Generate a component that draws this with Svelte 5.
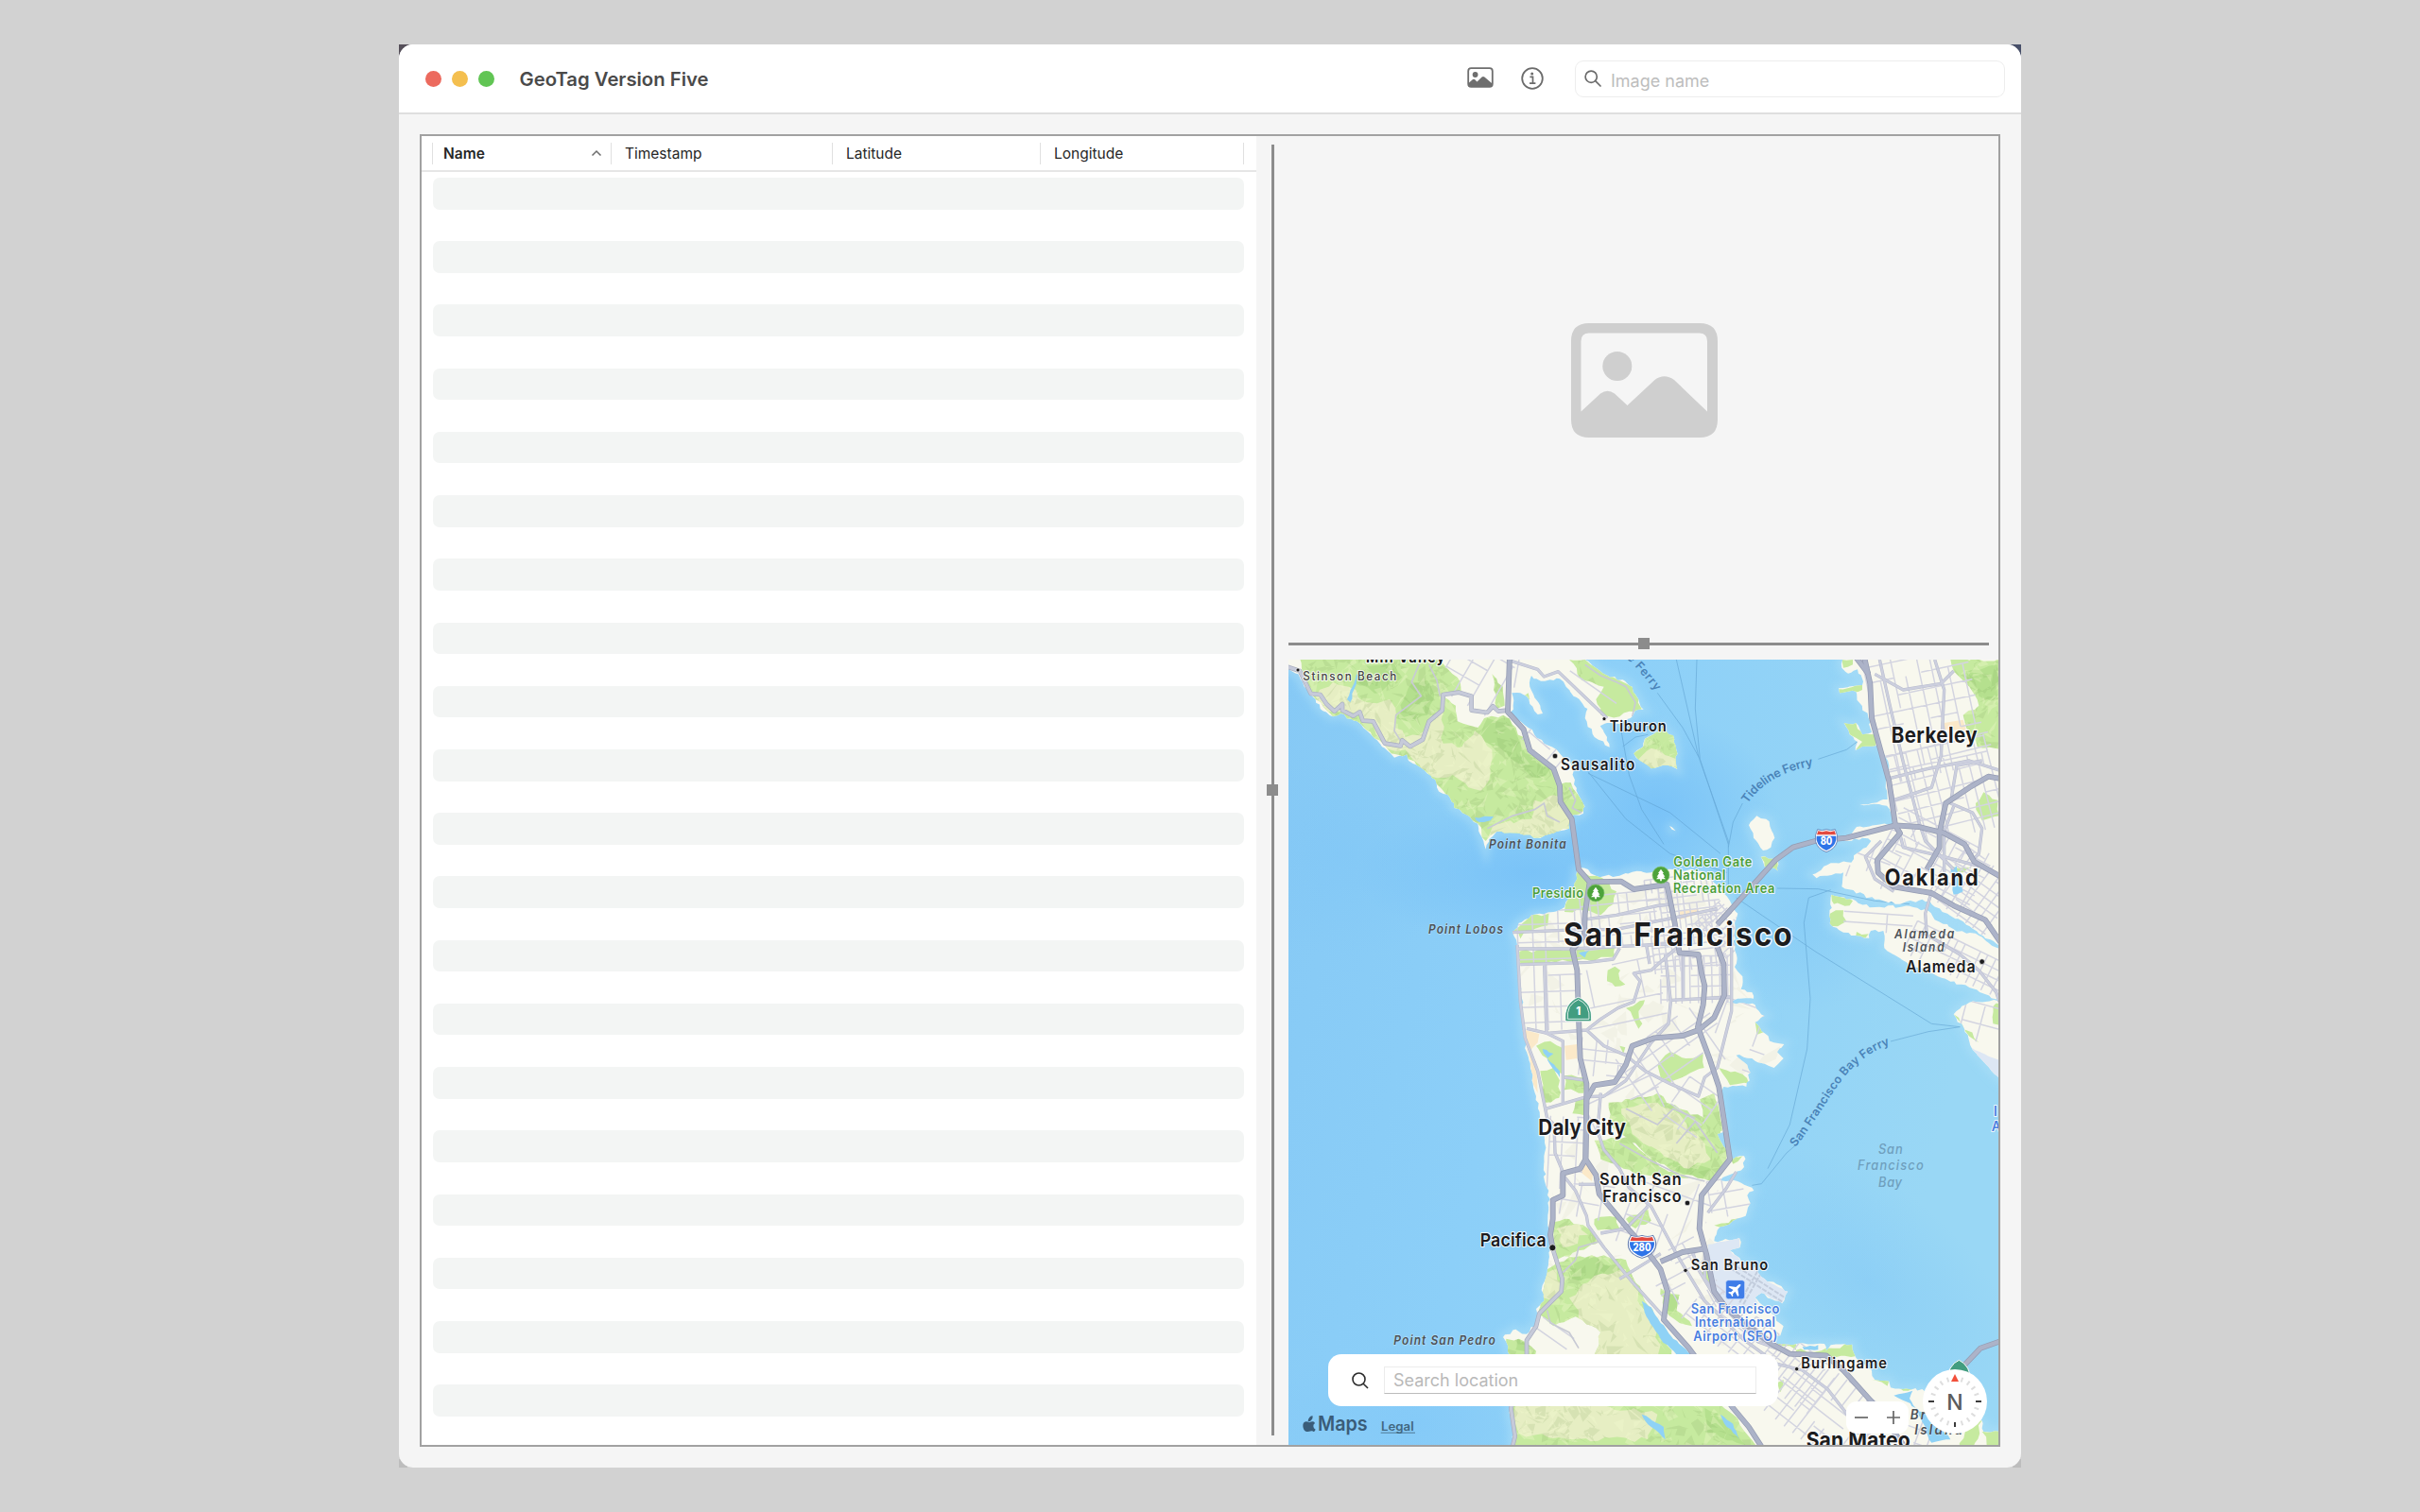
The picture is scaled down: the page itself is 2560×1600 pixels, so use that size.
<script>
  const columns = [
    { label: 'Name', key: 'name', sorted: true },
    { label: 'Timestamp', key: 'timestamp' },
    { label: 'Latitude', key: 'latitude' },
    { label: 'Longitude', key: 'longitude' },
  ];
  const rows = Array.from({ length: 40 }, (_, i) => i);

  // Deterministic random source, so the terrain is the same on every load.
  let seed = 7;
  const rnd = () => {
    seed = (seed * 1664525 + 1013904223) % 4294967296;
    return seed / 4294967296;
  };

  const parse = (s) => s.trim().split(/\s+/).map((p) => p.split(',').map(Number));

  // Turns a coarse outline into a ragged shoreline.
  function rough(s, amp = 7, step = 16) {
    const pts = parse(s);
    let d = '';
    pts.forEach(([x, y], i) => {
      const [nx, ny] = pts[(i + 1) % pts.length];
      const len = Math.hypot(nx - x, ny - y);
      const n = Math.max(1, Math.round(len / step));
      for (let k = 0; k < n; k++) {
        const t = k / n;
        const a = k === 0 ? 0 : amp;
        const px = x + (nx - x) * t + (rnd() - 0.5) * a * 2;
        const py = y + (ny - y) * t + (rnd() - 0.5) * a * 2;
        d += (d ? 'L' : 'M') + px.toFixed(1) + ' ' + py.toFixed(1);
      }
    });
    return d + 'Z';
  }

  const line = (s) => 'M' + parse(s).map((p) => p.join(' ')).join('L');

  // Street grid centred on (cx, cy), rotated by deg; some segments are left out.
  function grid(cx, cy, w, h, dx, dy, deg, keep = 0.8) {
    const r = (deg * Math.PI) / 180;
    const c = Math.cos(r);
    const s = Math.sin(r);
    const at = (x, y) => (cx + x * c - y * s).toFixed(1) + ' ' + (cy + x * s + y * c).toFixed(1);
    let d = '';
    for (let x = -w / 2; x <= w / 2; x += dx * (0.8 + rnd() * 0.4))
      for (let y = -h / 2; y < h / 2; y += dy * 2)
        if (rnd() < keep) d += 'M' + at(x, y) + 'L' + at(x, Math.min(h / 2, y + dy * 2));
    for (let y = -h / 2; y <= h / 2; y += dy * (0.8 + rnd() * 0.4))
      for (let x = -w / 2; x < w / 2; x += dx * 2)
        if (rnd() < keep) d += 'M' + at(x, y) + 'L' + at(Math.min(w / 2, x + dx * 2), y);
    return d;
  }

  // Faceted hill shading.
  function facets(x0, y0, x1, y1, n, size) {
    let d = '';
    for (let i = 0; i < n; i++) {
      const x = x0 + rnd() * (x1 - x0);
      const y = y0 + rnd() * (y1 - y0);
      const q = () => ((rnd() - 0.5) * size).toFixed(1);
      d += `M${x.toFixed(1)} ${y.toFixed(1)}l${q()} ${q()}l${q()} ${q()}l${q()} ${q()}Z`;
    }
    return d;
  }

  const land = [
    '-30,0 10,55 40,70 70,120 95,150 110,180 150,205 175,195 240,230 290,280 325,315 345,335 385,325 390,345 440,375 475,405 480,430 500,450 520,460 535,495 580,520 610,545 618,580 635,626 645,595 670,570 740,575 800,590 850,575 900,560 905,520 945,512 950,490 930,455 915,420 915,375 890,340 860,310 820,290 770,240 735,215 715,190 722,170 718,130 745,130 765,140 775,165 800,198 816,195 808,170 790,145 775,110 780,75 810,92 850,90 870,85 890,110 958,180 950,210 980,270 1028,302 1020,270 998,235 1020,225 1060,228 1100,205 1110,185 1136,182 1120,150 1100,110 1070,88 1030,80 985,50 950,24 940,0',
    '1105,322 1135,300 1140,275 1165,262 1200,240 1230,265 1240,310 1243,372 1215,360 1160,370 1125,345',
    '935,685 960,690 985,710 1050,712 1100,698 1160,700 1230,690 1320,695 1370,740 1410,790 1435,830 1425,860 1425,945 1432,980 1425,1000 1450,1030 1445,1070 1480,1080 1485,1100 1420,1106 1405,1114 1490,1120 1520,1155 1490,1175 1520,1210 1550,1240 1582,1245 1560,1270 1580,1290 1550,1320 1510,1305 1480,1290 1430,1280 1465,1310 1475,1335 1462,1380 1430,1378 1390,1380 1385,1400 1388,1525 1370,1530 1390,1570 1420,1610 1455,1600 1455,1635 1420,1655 1380,1678 1420,1676 1480,1700 1486,1710 1465,1725 1475,1750 1460,1790 1420,1805 1370,1835 1360,1870 1440,1860 1442,1890 1410,1900 1455,1940 1480,1940 1520,1990 1594,2030 1576,2068 1510,2035 1490,2050 1580,2140 1570,2170 1550,2180 1560,2196 1710,2196 1715,2218 1730,2200 1798,2198 1810,2240 1860,2280 1870,2310 1915,2315 1920,2335 1960,2340 2020,2340 2060,2380 2140,2410 2170,2440 2210,2440 2215,2475 2290,2470 2290,2560 700,2560 725,2518 715,2440 710,2380 705,2220 700,2190 690,2175 730,2150 765,2165 800,2130 795,2085 820,2060 815,2010 830,1970 835,1930 840,1870 835,1830 835,1710 822,1680 822,1550 808,1490 795,1410 780,1330 765,1270 757,1230 750,1100 740,1020 735,930 720,890 740,860 780,835 850,825 885,810 900,770 925,720 925,690',
    '1765,0 1765,50 1785,68 1815,55 1830,85 1830,105 1755,115 1758,130 1810,125 1820,160 1850,210 1860,255 1830,262 1810,225 1772,225 1790,262 1815,285 1808,312 1830,300 1885,300 1915,360 1905,400 1910,468 1822,484 1908,488 1925,520 1928,545 1812,555 1772,600 1830,590 1858,600 1812,640 1795,668 1730,670 1672,706 1685,718 1770,700 1765,745 1870,785 1950,800 2020,785 2050,800 2100,830 2170,870 2290,950 2290,0',
    '1732,770 1870,810 1980,806 2040,822 2060,850 2120,880 2200,900 2290,960 2290,1120 2170,1065 2070,1030 1970,985 1900,940 1897,885 1857,885 1852,908 1770,890 1727,862',
    '2120,1150 2170,1112 2290,1105 2290,1370 2250,1340 2180,1262 2165,1215',
    '1470,550 1495,520 1525,530 1552,590 1540,620 1515,630 1485,590',
    '1508,650 1560,660 1563,695 1520,682',
    '1218,552 1226,556 1238,568 1226,563',
  ].map((s) => rough(s, 4.5, 13));

  const green = [
    '40,0 470,0 545,80 558,130 500,140 540,170 545,220 610,240 630,210 690,200 720,230 755,270 770,320 840,360 870,420 905,415 930,455 950,500 905,520 900,560 800,590 670,570 635,600 610,545 535,495 500,440 440,375 390,340 325,310 240,230 150,205 95,150 60,90',
    '900,24 950,24 1040,80 1100,110 1130,180 1060,205 1000,200 985,150 1010,110 940,90',
    '1100,322 1135,300 1140,275 1165,262 1200,235 1235,265 1245,372 1215,362 1160,372 1125,350',
    '735,150 770,130 775,150 745,165',
    '655,70 690,110 695,170 670,180 660,120',
    '925,700 990,710 1050,760 1040,800 1000,835 950,820 885,825 905,760',
    '722,885 780,835 835,830 832,868 760,885 745,910',
    '742,950 905,945 1045,932 1045,968 960,978 745,990',
    '1022,1010 1045,998 1062,1010 1060,1040 1078,1055 1045,1062 1020,1045',
    '1080,1130 1140,1105 1120,1140 1132,1180 1120,1196 1100,1155',
    '1060,1250 1078,1255 1072,1275',
    '1180,1310 1220,1270 1270,1290 1325,1275 1328,1320 1270,1345 1215,1368 1190,1350',
    '795,1250 840,1235 875,1255 880,1340 850,1330 830,1290',
    '808,1330 850,1320 870,1360 868,1415 820,1430',
    '885,1345 950,1350 945,1400 885,1390',
    '920,1425 950,1410 945,1470 910,1465',
    '1025,1430 1100,1420 1180,1400 1250,1450 1330,1480 1380,1520 1400,1600 1395,1640 1350,1680 1240,1650 1150,1600 1080,1540 1030,1500',
    '980,1550 1080,1540 1200,1640 1280,1670 1120,1660 1000,1610',
    '1315,1420 1360,1400 1385,1520 1330,1515',
    '1375,1320 1450,1340 1470,1370 1410,1375',
    '980,1800 1050,1795 1060,1830 990,1835',
    '1080,1800 1150,1770 1160,1805 1110,1830',
    '850,1810 900,1800 960,1830 1000,1870 930,1900 860,1930 850,1880',
    '830,1960 900,1920 1010,1915 1080,1930 1100,1980 1140,2060 1180,2120 1210,2200 1260,2280 1330,2350 1420,2420 1500,2530 725,2530 715,2400 850,2260 980,2230 1000,2160 920,2110 850,2140 800,2100',
    '700,2180 740,2180 795,2220 790,2300 700,2300',
    '1190,2020 1250,2040 1240,2090 1290,2140 1250,2130 1205,2090',
    '1320,1970 1340,1960 1355,2030 1335,2010',
    '1560,2196 1620,2196 1620,2220 1700,2218 1798,2198 1810,2235 1740,2240',
    '1860,2310 1915,2312 1910,2330',
    '1940,2330 1990,2315 2020,2335 1960,2345',
    '1560,2320 1580,2310 1570,2350',
    '2110,24 2290,24 2290,310 2195,300 2160,240 2150,200 2200,170 2170,110 2120,60',
    '2190,480 2215,445 2260,470 2265,520 2210,535',
    '1765,24 1800,24 1800,40 1770,50',
    '1755,118 1830,105 1830,120 1758,132',
    '1772,225 1810,225 1830,255 1870,262 1872,300 1810,310 1830,285 1790,262',
    '1732,770 1800,790 1790,805 1740,800',
    '1728,830 1770,820 1780,855 1730,870',
    '1812,888 1850,895 1840,908 1810,900',
    '2115,680 2170,685 2150,700 2118,692',
    '2245,1125 2275,1115 2275,1190 2245,1180',
    '2120,1150 2200,1240 2170,1220',
    '1508,650 1560,660 1563,695 1520,682',
    '1490,1175 1520,1205 1495,1215',
    '2160,2440 2210,2440 2180,2530 2140,2530',
    '2210,2475 2290,2470 2290,2530 2225,2520',
    '1400,1600 1450,1600 1420,1625',
    '1360,1820 1440,1798 1400,1830',
  ].map((s) => rough(s, 6, 20));

  const cream = [
    '95,140 150,95 200,110 260,160 330,150 350,190 345,240 380,270 440,250 500,190 500,290 560,300 600,250 655,310 650,380 620,440 580,430 530,390 480,400 430,370 380,310 330,310 270,220 200,190 130,190',
    '790,470 870,460 900,530 900,560 800,588 670,570 640,590 660,545 780,530',
    '1120,340 1160,305 1215,330 1240,340 1240,365 1160,368',
    '1065,1450 1180,1430 1260,1480 1330,1560 1350,1610 1280,1640 1200,1600 1100,1530',
    '825,1560 850,1600 850,1680 835,1690',
    '820,1975 860,1960 880,2010 850,2060 815,2050',
    '900,2050 980,1980 1080,1960 1140,2090 1190,2200 1170,2260 1000,2260 960,2150',
    '730,2390 1000,2390 1180,2420 1150,2500 900,2500 740,2480',
    '860,1830 930,1810 960,1850 880,1890',
  ].map((s) => rough(s, 9, 22));

  const forest = [
    '350,210 400,100 450,90 470,150 450,200 380,220',
    '610,280 640,210 710,210 760,320 840,370 800,400 700,320',
    '240,40 330,30 370,80 300,130 220,100',
    '830,520 880,530 880,560 830,575',
    '1200,1640 1260,1610 1350,1640 1320,1680',
    '880,1960 960,1920 1030,1950 1010,2000 910,1990',
    '1010,2350 1080,2340 1100,2390 1030,2400',
    '1330,2400 1400,2440 1460,2518 1340,2480',
    '735,2180 790,2200 795,2220 730,2215',
    '1200,2040 1250,2050 1250,2090 1205,2090',
    '2160,60 2260,40 2260,150 2200,140',
    '960,600 980,600 970,620',
  ].map((s) => rough(s, 9, 22));

  const ponds = [
    '815,1260 850,1275 830,1290 870,1330 870,1350 840,1310',
    '1130,2060 1160,2080 1190,2130 1230,2180 1290,2230 1240,2230 1190,2180 1145,2110',
    '1380,2420 1420,2450 1440,2500 1400,2460',
    '1130,2420 1200,2460 1205,2500 1160,2460',
    '600,525 660,522 650,535 615,540',
    '195,150 225,70 232,75 205,160',
    '2110,690 2130,680 2150,760 2120,770',
    '1640,2205 1690,2200 1690,2215 1645,2215',
    '1930,2360 1990,2345 1980,2370 2000,2400 1970,2380',
    '2000,2400 2060,2440 2110,2500 2050,2510 2030,2460',
    '930,955 965,945 950,970',
  ].map((s) => rough(s, 3, 14));

  const airport = [
    rough('1340,1880 1440,1860 1442,1890 1410,1900 1455,1940 1480,1940 1520,1990 1594,2030 1576,2068 1510,2035 1490,2050 1500,2070 1430,2090 1375,2050 1350,1990', 3, 16),
    rough('2175,1255 2290,1310 2290,1370 2240,1340', 3, 16),
  ];
  const runways = ['1400,1930 1585,2050', '1395,1945 1575,2062', '1530,1935 1450,2075', '1518,1930 1438,2070'].map(line).join('');

  const minor = [
    grid(840, 1010, 200, 380, 46, 52, -2, 0.85),
    grid(1070, 850, 260, 170, 30, 34, -6, 0.8),
    grid(1270, 860, 230, 300, 20, 22, -7, 0.8),
    grid(1390, 880, 110, 150, 18, 18, -42, 0.8),
    grid(1300, 1040, 220, 150, 24, 36, -1, 0.8),
    grid(1060, 1110, 280, 240, 70, 60, -12, 0.55),
    grid(1240, 1280, 330, 200, 60, 50, -35, 0.6),
    grid(1450, 1220, 170, 200, 60, 60, 20, 0.6),
    grid(1010, 1290, 150, 120, 44, 38, 6, 0.7),
    grid(890, 1590, 110, 230, 42, 44, 3, 0.75),
    grid(1080, 1440, 240, 110, 70, 50, -25, 0.5),
    grid(1290, 1450, 130, 160, 60, 50, 35, 0.5),
    grid(950, 1780, 160, 190, 60, 56, 10, 0.5),
    grid(1210, 1790, 250, 260, 62, 62, 20, 0.6),
    grid(1410, 1730, 130, 120, 56, 50, -10, 0.55),
    grid(1270, 2000, 180, 230, 44, 42, -28, 0.65),
    grid(1500, 2210, 500, 150, 46, 36, 38, 0.65),
    grid(1690, 2390, 420, 240, 40, 42, 38, 0.75),
    grid(1960, 2470, 280, 130, 46, 40, 20, 0.6),
    grid(860, 2190, 160, 80, 60, 40, 35, 0.4),
    grid(2030, 180, 330, 420, 44, 48, -12, 0.8),
    grid(2100, 440, 340, 300, 36, 44, -14, 0.78),
    grid(2060, 660, 330, 200, 34, 36, 28, 0.75),
    grid(1880, 680, 170, 130, 60, 46, 20, 0.45),
    grid(2190, 760, 210, 200, 34, 34, 36, 0.8),
    grid(2130, 975, 330, 110, 28, 26, 26, 0.85),
    grid(1880, 860, 220, 60, 60, 40, 4, 0.4),
    grid(2210, 1180, 130, 120, 60, 60, 15, 0.5),
    grid(600, 80, 190, 180, 60, 55, 30, 0.5),
    grid(740, 60, 90, 110, 44, 44, 10, 0.4),
    grid(830, 300, 150, 70, 44, 34, 40, 0.6),
    grid(970, 120, 180, 130, 66, 60, 35, 0.35),
  ].join('');

  const lanes = [
    '430,24 400,95 430,140 350,200 345,250 370,290',
    '455,40 480,90 490,140',
    '640,560 720,520 790,500 820,480 830,520 870,540',
    '950,40 1000,75 1050,95 1080,110 1110,160 1100,205',
    '900,430 920,470 910,495 940,510',
    '830,2090 840,2130 900,2160 930,2210',
    '1080,1450 1180,1500 1230,1450 1300,1480',
    '1060,1560 1150,1610 1250,1660 1330,1680',
    '880,1970 920,1930 930,1890 1000,1870',
    '1240,1560 1300,1490 1370,1590',
  ].map(line);

  const roads = [
    '715,28 800,55 820,78 865,62 1020,210',
    '720,890 880,883 1050,880 1200,850 1370,815',
    '735,942 910,942 1050,935 1160,930 1250,925',
    '745,992 960,985 1040,975 1060,940',
    '940,850 1050,835 1180,805 1230,800',
    '821,995 828,1210 880,1235 880,1430',
    '735,930 745,1110 760,1225 800,1330 830,1480 852,1500 855,1590 880,1650',
    '765,1195 830,1210 955,1200 1000,1165 1055,1130 1105,1110 1125,1045 1105,1020 1160,1010 1240,940',
    '825,1450 955,1412 1010,1410 1080,1360 1160,1240 1215,1180 1222,1110 1205,960',
    '955,1200 1010,1250 1080,1280 1140,1330 1220,1370 1310,1410 1330,1350 1370,1320 1415,1140 1415,860',
    '1225,1105 1410,1095',
    '1145,930 1155,990',
    '1262,960 1262,1100',
    '885,1350 955,1360',
    '1000,1400 990,1520 1010,1580 1060,1640 1090,1700 1160,1760 1240,1910 1330,2060 1450,2180 1560,2260 1640,2280 1720,2340 1790,2430',
    '880,1660 920,1710 955,1790 960,1820 1010,1890 1100,2000 1200,2110',
    '930,1690 985,1690',
    '1000,1845 1080,1830 1150,1760',
    '1060,1990 1190,1910',
    '1290,1900 1310,1960 1370,2060 1500,2190 1610,2230',
    '1330,1900 1330,1990 1400,2080 1520,2190',
    '1885,24 1920,180 1960,350 2010,540 2030,600 2120,690',
    '1920,400 2040,370 2170,345 2265,375',
    '1930,470 2050,430 2080,330 2090,120 2060,24',
    '1870,70 1960,120 2080,100 2120,60',
    '2210,345 2130,360 2110,480 2180,510 2210,560 2200,640 2180,660',
    '1950,580 1960,620 2090,650 2200,680',
    '2050,760 2030,830 2035,900',
    '2040,900 2140,960 2200,1010 2255,1080 2265,1110',
    '1890,600 1840,650 1870,720 1930,760',
    '2120,490 2090,570 2090,700',
    '1430,1650 1400,1700 1340,1780',
  ].map(line);

  const arteries = [
    '0,45 45,60 80,132 110,135 130,165 155,188 180,165 180,185 215,203 235,190 245,218 278,220 315,290 365,298 370,280 395,300 435,278 455,220 497,185 500,135 550,128 590,140 590,185 640,192 658,172 675,188 705,185',
    '848,1895 878,1990 875,2030 805,2100 795,2140 765,2185 765,2240 715,2400 728,2490 718,2530',
  ].map(line);

  const highways = [
    '711,10 705,190 755,245 775,312 850,370 870,425 872,475 908,530 930,690 965,730 1065,728 1105,753 1210,738 1235,860 1250,955 1310,960 1320,1020 1330,1060 1325,1120 1308,1190 1345,1290 1375,1380 1410,1610 1320,1725 1313,1830 1335,1910 1360,2030 1400,2085 1540,2195 1600,2228 1715,2233 1770,2280 1860,2380 1970,2530',
    '965,730 950,830 948,900 910,945 925,1010 930,1160 935,1290 955,1370 955,1420 952,1610 935,1640 880,1655 880,1725 848,1740 848,1800 840,1850 848,1895',
    '1370,935 1390,990 1392,1090 1360,1160 1310,1200 1260,1218 1170,1225 1100,1250 1080,1310 1045,1365 980,1375 955,1420 952,1610 985,1660 995,1720 1090,1835 1130,1880 1190,1960 1212,2030 1200,2120 1280,2210 1420,2400 1470,2460 1515,2530',
    '1190,1935 1260,1905 1325,1895',
    '1370,865 1420,810 1555,660 1610,620 1680,600 1780,590 1935,550',
    '1835,10 1855,100 1860,210 1915,410 1935,550 1950,575 1878,660 1880,700 1930,745 2050,765 2120,805 2220,850 2285,945',
    '1805,10 1850,70',
    '1935,550 2010,555 2090,575 2155,610 2185,665 2285,722',
    '2035,690 2075,620 2075,575 2095,480 2170,430 2230,395 2285,405',
    '2150,2268 2205,2210 2285,2182',
  ].map(line);

  const ferries = [
    '1240,24 1310,330 1405,600 1405,740',
    '1305,24 1300,180 1315,340',
    '1180,130 1260,240 1312,335',
    '1315,340 1405,610',
    '960,380 1080,530 1220,640 1400,700',
    '1065,250 1090,390 1130,500 1200,610',
    '960,385 1220,510 1380,640',
    '1070,300 1110,270 1150,262',
    '1820,280 1780,310 1690,340',
    '1450,480 1420,540 1405,620',
    '1430,780 1680,950 2050,1180 2140,1190',
    '1560,750 1690,752 1870,790 1980,800',
    '1730,755 1660,780 1645,860 1665,1100 1655,1260 1600,1500 1530,1640',
    '1480,1693 1510,1688 1590,1590 1625,1560',
    '1920,1236 2040,1205 2140,1190',
  ].map(line);

  const facetDark = facets(40, 20, 960, 600, 420, 68) + facets(700, 1380, 1480, 2520, 560, 70) + facets(2120, 20, 2264, 320, 50, 60) + facets(1100, 230, 1250, 380, 25, 50);
  const facetLight = facets(40, 20, 960, 600, 320, 68) + facets(700, 1380, 1480, 2520, 400, 70) + facets(2120, 20, 2264, 320, 40, 60) + facets(1100, 230, 1250, 380, 20, 50);

  // Map lettering is drawn slightly condensed and then tracked out to its width.
  const squeeze = 0.92;

  // t: text, x/y: baseline start, w: drawn length, s: size, c: style
  const labels = [
    { t: 'Mill Valley', x: 255, y: 34, w: 250, s: 46, c: 'city bold' },
    { t: 'Stinson Beach', x: 55, y: 91, w: 297, s: 38, c: 'town' },
    { t: 'Tiburon', x: 1028, y: 252, w: 180, s: 48, c: 'city' },
    { t: 'Sausalito', x: 873, y: 375, w: 235, s: 50, c: 'city' },
    { t: 'Point Bonita', x: 645, y: 624, w: 245, s: 39, c: 'cape' },
    { t: 'Point Lobos', x: 453, y: 895, w: 237, s: 39, c: 'cape' },
    { t: 'Point San Pedro', x: 343, y: 2199, w: 322, s: 39, c: 'cape' },
    { t: 'Presidio', x: 783, y: 781, w: 162, s: 42, c: 'park' },
    { t: 'Golden Gate', x: 1231, y: 682, w: 249, s: 42, c: 'park' },
    { t: 'National', x: 1230, y: 724, w: 166, s: 42, c: 'park' },
    { t: 'Recreation Area', x: 1230, y: 766, w: 322, s: 42, c: 'park' },
    { t: 'Berkeley', x: 1922, y: 288, w: 273, s: 67, c: 'city bold' },
    { t: 'Oakland', x: 1901, y: 740, w: 297, s: 71, c: 'city bold' },
    { t: 'Alameda', x: 1932, y: 908, w: 190, s: 39, c: 'cape' },
    { t: 'Island', x: 1958, y: 950, w: 132, s: 39, c: 'cape' },
    { t: 'Alameda', x: 1968, y: 1017, w: 221, s: 52, c: 'city' },
    { t: 'San Francisco', x: 882, y: 932, w: 725, s: 103, c: 'metro' },
    { t: 'Daly City', x: 802, y: 1532, w: 278, s: 67, c: 'city bold' },
    { t: 'South San', x: 996, y: 1691, w: 260, s: 53, c: 'city' },
    { t: 'Francisco', x: 1006, y: 1746, w: 250, s: 53, c: 'city' },
    { t: 'Pacifica', x: 617, y: 1886, w: 210, s: 58, c: 'city' },
    { t: 'San Bruno', x: 1286, y: 1963, w: 245, s: 48, c: 'city' },
    { t: 'San Francisco', x: 1286, y: 2099, w: 281, s: 42, c: 'air' },
    { t: 'International', x: 1299, y: 2142, w: 255, s: 42, c: 'air' },
    { t: 'Airport (SFO)', x: 1294, y: 2186, w: 267, s: 42, c: 'air' },
    { t: 'I', x: 2247, y: 1474, w: 11, s: 44, c: 'air' },
    { t: 'A', x: 2240, y: 1520, w: 27, s: 44, c: 'air' },
    { t: 'Burlingame', x: 1636, y: 2274, w: 272, s: 48, c: 'city' },
    { t: 'San Mateo', x: 1652, y: 2527, w: 330, s: 69, c: 'city bold' },
    { t: 'Brewer', x: 1982, y: 2436, w: 170, s: 44, c: 'cape' },
    { t: 'Island', x: 1996, y: 2483, w: 152, s: 44, c: 'cape' },
    { t: 'San', x: 1881, y: 1592, w: 77, s: 42, c: 'bay' },
    { t: 'Francisco', x: 1815, y: 1644, w: 209, s: 42, c: 'bay' },
    { t: 'Bay', x: 1881, y: 1697, w: 75, s: 42, c: 'bay' },
  ];

  const dots = [
    [39, 57, 6], [1011, 212, 6], [855, 330, 8.5], [2210, 983, 8.5],
    [1275, 1749, 8.5], [847, 1891, 10.5], [1269, 1963, 6.5], [1622, 2276, 6.5],
  ];
  const trees = [[984, 765], [1191, 708]];
  const ticks = Array.from({ length: 20 }, (_, i) => i * 18).filter((a) => a % 90 !== 0);
</script>

<div class="desk">
  <div class="shot">
    <div class="window">
      <header>
        <div class="lights"><i class="red"></i><i class="amber"></i><i class="lime"></i></div>
        <h1>GeoTag Version Five</h1>
        <div class="tools">
          <svg class="pic" viewBox="0 0 28 22">
            <rect x="1.2" y="1.2" width="25.6" height="19.6" rx="3" fill="none" stroke="#6e6e6e" stroke-width="1.8" />
            <circle cx="8.6" cy="8" r="2.9" fill="#6e6e6e" />
            <path d="M2 16.5 6 13Q7 12.4 8 13L10.5 15.4 15.6 10.6Q17 9.6 18.4 10.6L26 17V19.5Q26 20.8 24 20.8H4Q2 20.8 2 19Z" fill="#6e6e6e" />
          </svg>
          <svg class="info" viewBox="0 0 24 24">
            <circle cx="12" cy="12" r="10.8" fill="none" stroke="#6b6b6b" stroke-width="1.8" />
            <circle cx="11.7" cy="6.9" r="1.5" fill="#6b6b6b" />
            <path d="M9.4 10.4H12.5V17M9 17.2H15.4" fill="none" stroke="#6b6b6b" stroke-width="1.7" />
          </svg>
          <label class="search">
            <svg viewBox="0 0 18 18"><circle cx="7.2" cy="7.2" r="6.1" /><path d="M11.7 11.7 17 17" /></svg>
            <span>Image name</span>
          </label>
        </div>
      </header>

      <main>
        <section class="table">
          <div class="head">
            {#each columns as col}
              <div class="cell {col.key}">
                <span class:strong={col.sorted}>{col.label}</span>
                {#if col.sorted}
                  <svg viewBox="0 0 12 8"><path d="M1.5 6.5 6 2 10.5 6.5" /></svg>
                {/if}
              </div>
            {/each}
          </div>
          <div class="rows">
            {#each rows as r}<div class="row" class:band={r % 2 === 0}></div>{/each}
          </div>
        </section>

        <div class="split vertical"><b></b></div>

        <section class="side">
          <div class="preview">
            <svg viewBox="0 0 155 121">
              <path fill-rule="evenodd" d="M19 0H136Q155 0 155 19V102Q155 121 136 121H19Q0 121 0 102V19Q0 0 19 0ZM19 10.500Q10.500 10.500 10.500 19V93.500L31 74.500Q38.500 69 46 74.500L59.500 87 88.500 60Q98.500 52.500 109 60L144 93.500V19Q144 10.500 135.500 10.500Z" />
              <circle cx="48.800" cy="45.500" r="15.500" />
            </svg>
          </div>
          <div class="split horizontal"><b></b></div>
          <div class="map">
            <svg class="canvas" viewBox="9 24 2253 2493" preserveAspectRatio="none">
              <defs>
                <linearGradient id="sea" x1="0" y1="0" x2="1" y2="0.250">
                  <stop offset="0" stop-color="#86c9f5" />
                  <stop offset="0.400" stop-color="#8ccff8" />
                  <stop offset="1" stop-color="#99d7f5" />
                </linearGradient>
                <radialGradient id="deep"><stop offset="0" stop-color="#74bff7" /><stop offset="0.500" stop-color="#74bff7" stop-opacity="0.500" /><stop offset="1" stop-color="#74bff7" stop-opacity="0" /></radialGradient>
                <filter id="soft" x="-10%" y="-10%" width="120%" height="120%"><feGaussianBlur stdDeviation="13" /></filter>
                <clipPath id="ground">{#each land as d}<path {d} />{/each}</clipPath>
                <clipPath id="woods">{#each green as d}<path {d} />{/each}</clipPath>
                <path id="tideline" d="M1466 482Q1530 383 1690 358" />
                <path id="bayferry" d="M1618 1572C1694 1476 1750 1362 1808 1312S1885 1260 1935 1238" />
                <path id="topferry" d="M1082 20Q1132 66 1186 142" />
              </defs>
              <rect x="0" y="0" width="2280" height="2530" fill="url(#sea)" />
              <ellipse cx="780" cy="700" rx="560" ry="230" fill="url(#deep)" opacity="0.750" />
              <ellipse cx="1180" cy="500" rx="380" ry="300" fill="url(#deep)" opacity="0.800" />
              <ellipse cx="180" cy="640" rx="420" ry="330" fill="url(#deep)" opacity="0.200" />
              <ellipse cx="1850" cy="2000" rx="560" ry="300" fill="url(#deep)" opacity="0.300" transform="rotate(40 1850 2000)" />
              <ellipse cx="420" cy="2450" rx="480" ry="260" fill="url(#deep)" opacity="0.300" />
              <ellipse cx="1640" cy="850" rx="260" ry="300" fill="url(#deep)" opacity="0.300" />
              <g filter="url(#soft)" opacity="0.550">{#each land as d}<path {d} fill="none" stroke="#b0e1f8" stroke-width="28" />{/each}</g>
              <g class="ferry">{#each ferries as d}<path {d} />{/each}</g>
              <g fill="#f8f8ee">{#each land as d}<path {d} />{/each}</g>
              <g clip-path="url(#ground)">
                <path d={facets(720, 680, 1560, 1340, 70, 110) + facets(700, 1600, 1500, 2500, 60, 100)} fill="#e9e9da" opacity="0.400" />
                <path d="M760 1200 805 1212 800 1240 775 1265 762 1225ZM772 1270 795 1300 800 1400 785 1370ZM885 1250 925 1245 925 1290 890 1295ZM945 1610 975 1660 972 1680 935 1650ZM1250 820 1310 815 1312 830 1252 850ZM2090 225 2150 215 2160 250 2090 245Z" fill="#fbe9c9" />
                <g fill="#c6ea9f">{#each green as d}<path {d} />{/each}</g>
                <g clip-path="url(#woods)">
                  <g fill="#b0dd8a" opacity="0.800">{#each forest as d}<path {d} />{/each}</g>
                  <g fill="#e6eec3">{#each cream as d}<path {d} />{/each}</g>
                  <path d={facetDark} fill="#6f8f4a" opacity="0.130" />
                  <path d={facetLight} fill="#f4fbd0" opacity="0.300" />
                </g>
                <g fill="#dde7f4">{#each airport as d}<path {d} />{/each}</g>
                <path d={runways} stroke="#c3cddd" stroke-width="6" stroke-dasharray="16 4" fill="none" />
                <path d={minor} stroke="#d3d4e0" stroke-width="4.500" fill="none" />
                <g class="lane">{#each lanes as d}<path {d} />{/each}</g>
              </g>
              <g fill="#8fd2f6">{#each ponds as d}<path {d} />{/each}</g>
              <g class="road casing">{#each roads as d}<path {d} />{/each}</g>
              <g class="road">{#each roads as d}<path {d} />{/each}</g>
              <g class="artery casing">{#each arteries as d}<path {d} />{/each}</g>
              <g class="artery">{#each arteries as d}<path {d} />{/each}</g>
              <g class="highway casing">{#each highways as d}<path {d} />{/each}</g>
              <g class="highway">{#each highways as d}<path {d} />{/each}</g>

              {#each trees as [x, y]}
                <g transform="translate({x} {y})">
                  <circle r="27" fill="#4da33b" stroke="#7dbf6d" stroke-width="2" />
                  <path d="M0-19 9-6H5.500L13 5H8L15 13H2.500V19H-2.500V13H-15L-8 5H-13L-5.500-6H-9Z" fill="#fff" />
                </g>
              {/each}

              <g transform="translate(929 1133)">
                <path d="M-39 37Q-42 14-32-8-20-28 0-35 20-28 32-8 42 14 39 37Z" fill="#429d80" stroke="#fff" stroke-width="7" stroke-linejoin="round" />
                <path d="M-39 37Q-42 14-32-8-20-28 0-35 20-28 32-8 42 14 39 37Z" fill="#429d80" stroke="#429d80" stroke-width="2" stroke-linejoin="round" />
                <path d="M-34 32Q-36 12-28-6-17-23 0-30 17-23 28-6 36 12 34 32Z" fill="none" stroke="#fff" stroke-width="2.500" />
                <text class="shield" x="0" y="18" font-size="34">1</text>
              </g>
              <g transform="translate(2137 2282)">
                <path d="M-37 37Q-38 10-28-8-16-28 0-34 16-28 28-8 38 10 37 37Z" fill="#429d80" stroke="#fff" stroke-width="3" />
              </g>
              {#each [{ x: 1716, y: 598, n: '80', k: 1, w: 38 }, { x: 1131, y: 1887, n: '280', k: 1.25, w: 57 }] as s}
                <g transform="translate({s.x} {s.y})">
                  <g transform="scale({s.k} 1)">
                    <path d="M-28-35Q-14-29 0-35 14-29 28-35 38-16 34 4 28 27 0 37-28 27-34 4-38-16-28-35Z" fill="#fff" stroke="#5e78ad" stroke-width="2.500" />
                    <path d="M-26-30Q-13-25 0-30 13-25 26-30L30-18H-30Z" fill="#e3493f" />
                    <path d="M-31-14H31Q33 3 22 17 14 26 0 32-14 26-22 17-33 3-31-14Z" fill="#2e74e8" />
                  </g>
                  <text class="shield" x="0" y="15" font-size="34" textLength={s.w} lengthAdjust="spacingAndGlyphs">{s.n}</text>
                </g>
              {/each}

              <g transform="translate(1427 2024)">
                <rect x="-30" y="-30" width="60" height="60" rx="8" fill="#3f7de8" stroke="#dce8fb" stroke-width="2" />
                <path transform="rotate(45)" d="M0-24Q4-22 4-15V-7L21 5V10L4 5V15L9 19V23L0 20-9 23V19L-4 15V5L-21 10V5L-4-7V-15Q-4-22 0-24Z" fill="#fff" />
              </g>

              {#each dots as [x, y, r]}<circle cx={x} cy={y} {r} fill="#1c1c1e" stroke="#fff" stroke-width="2" />{/each}
              {#each labels as l}
                <text class="label {l.c}" transform="translate({l.x} {l.y}) scale({squeeze} 1)" font-size={l.s} textLength={l.w / squeeze} lengthAdjust="spacing">{l.t}</text>
              {/each}
              <text class="label line" font-size="38"><textPath href="#tideline" textLength="248">Tideline Ferry</textPath></text>
              <text class="label line" font-size="37"><textPath href="#bayferry" textLength="452">San Francisco Bay Ferry</textPath></text>
              <text class="label line" font-size="37"><textPath href="#topferry" textLength="140">e Ferry</textPath></text>

              <g class="brand">
                <path d="M86 2427Q87 2436 81 2441 76 2446 71 2444 71 2436 76 2431 80 2427 86 2427ZM55 2460Q54 2447 65 2445 70 2445 75 2448 82 2444 87 2445 91 2446 93 2450 87 2454 88 2460 88 2467 95 2470 91 2480 85 2475 80 2474 75 2476 70 2477 66 2477 56 2474 55 2460Z" transform="translate(0 -2)" />
                <text x="102" y="2473" font-size="65" textLength="158" lengthAdjust="spacingAndGlyphs">Maps</text>
              </g>
              <text class="legal" x="303" y="2471" font-size="38" textLength="104" lengthAdjust="spacingAndGlyphs">Legal</text>
              <path d="M302 2478.500H411" stroke="#42677f" stroke-width="2.500" />
            </svg>

            <div class="finder">
              <svg viewBox="0 0 18 18"><circle cx="7.500" cy="7.500" r="6.500" /><path d="M12.200 12.200 17 17" /></svg>
              <div class="field">Search location</div>
            </div>
            <div class="zoom">
              <svg viewBox="0 0 16 16"><path d="M1 8H15" /></svg>
              <svg viewBox="0 0 16 16"><path d="M1 8H15M8 1V15" /></svg>
            </div>
            <div class="compass">
              <svg viewBox="-34 -34 68 68">
                {#each ticks as a}<path d="M0-26.500V-21.500" stroke="#dedede" stroke-width="2" transform="rotate({a})" />{/each}
                <path d="M-28 0H-22M22 0H28M0 22V27" stroke="#3c3c3c" stroke-width="2" />
                <path d="M0-29 4-21H-4Z" fill="#f2503b" />
                <text x="0" y="8.500">N</text>
              </svg>
            </div>
          </div>
        </section>
      </main>
    </div>
  </div>
</div>

<style>
  :global(body) { background: #d2d2d2; }
  .desk {
    box-sizing: border-box;
    width: 2560px;
    height: 1600px;
    padding: 47px 422px;
    background: #d2d2d2;
    font-family: Inter, "Liberation Sans", sans-serif;
    overflow: hidden;
  }
  .shot {
    width: 1716px;
    height: 1506px;
    background:
      linear-gradient(#554f59, #554f59) left top / 14px 14px no-repeat,
      linear-gradient(#485069, #485069) right top / 14px 14px no-repeat,
      linear-gradient(#bdbdbd, #bdbdbd) left bottom / 9px 9px no-repeat,
      linear-gradient(#bdbdbd, #bdbdbd) right bottom / 9px 9px no-repeat;
  }
  .window {
    display: flex;
    flex-direction: column;
    height: 100%;
    border-radius: 15px;
    background: #f5f5f5;
    overflow: hidden;
  }
  header {
    box-sizing: border-box;
    display: flex;
    align-items: center;
    flex: none;
    height: 74px;
    padding: 0 17px 0 28px;
    background: #fff;
    border-bottom: 2px solid #dedede;
  }
  .lights { display: flex; gap: 11px; }
  .lights i { width: 17px; height: 17px; border-radius: 50%; }
  .red { background: #ec6a5e; }
  .amber { background: #f4bf4f; }
  .lime { background: #61c554; }
  h1 {
    margin: 0 0 0 26.5px;
    font-size: 20.3px;
    font-weight: 600;
    letter-spacing: 0;
    color: #4a4a4a;
    white-space: nowrap;
  }
  .tools { display: flex; align-items: center; margin-left: auto; }
  .pic { width: 28px; height: 22px; margin-bottom: 2px; }
  .info { width: 24px; height: 24px; margin: 0 0 1px 29px; }
  .search {
    box-sizing: border-box;
    display: flex;
    align-items: center;
    width: 455px;
    height: 39px;
    margin-left: 33px;
    padding-left: 9px;
    border: 1.5px solid #ededed;
    border-radius: 9px;
    font-size: 18px;
    color: #bdbdbd;
  }
  .search svg { width: 18px; height: 18px; margin-right: 10px; fill: none; stroke: #6b6b6b; stroke-width: 1.7; stroke-linecap: round; }
  .search span { padding-top: 4px; }

  main {
    box-sizing: border-box;
    display: flex;
    height: 1389px;
    margin: 21px 22px 22px;
    border: 2px solid #a1a1a1;
  }
  .table { display: flex; flex-direction: column; width: 883px; background: #fff; }
  .head {
    box-sizing: border-box;
    display: flex;
    align-items: center;
    height: 38px;
    flex: none;
    padding-left: 11px;
    border-bottom: 2px solid #e6e6e6;
    font-size: 15.5px;
    color: #262626;
  }
  .cell {
    box-sizing: border-box;
    display: flex;
    align-items: center;
    justify-content: space-between;
    height: 23px;
    padding: 0 9px 0 14px;
    border-right: 1.5px solid #e0e0e0;
  }
  .name { width: 190px; padding-left: 11px; border-left: 1.5px solid #e0e0e0; }
  .timestamp { width: 234px; }
  .latitude { width: 220px; }
  .longitude { width: 215px; }
  .strong { font-weight: 600; }
  .cell svg { width: 12px; height: 8px; fill: none; stroke: #6c6c6c; stroke-width: 1.5; }
  .rows { padding: 6px 13px 0 12px; overflow: hidden; }
  .row { height: 33.62px; border-radius: 7px; }
  .band { background: #f3f5f4; }

  .split { display: flex; align-items: center; justify-content: center; }
  .split b { width: 12px; height: 12px; background: #8c8c8c; }
  .vertical {
    width: 34px;
    background: linear-gradient(#8c8c8c, #8c8c8c) 16px 9px / 3px 1366px no-repeat;
  }
  .vertical b { margin-bottom: 1px; }
  .side { display: flex; flex-direction: column; flex: 1; min-width: 0; }
  .preview { display: flex; justify-content: center; height: 520px; }
  .preview svg { width: 155px; height: 121px; margin: 198px 0 0 2px; fill: #cfcfcf; }
  .horizontal {
    height: 34px;
    background: linear-gradient(#8c8c8c, #8c8c8c) 0 16px / 741px 3px no-repeat;
  }
  .horizontal b { margin-left: 1px; }
  .map { position: relative; flex: 1; min-height: 0; overflow: hidden; }
  .canvas { display: block; width: 100%; height: 100%; }

  .ferry { fill: none; stroke: #5a9ccb; stroke-width: 2.4; opacity: 0.65; }
  .lane { fill: none; stroke: #c8cad4; stroke-width: 5; }
  .road { fill: none; stroke: #cccfde; stroke-width: 7; stroke-linejoin: round; }
  .road.casing { stroke: #b8bccd; stroke-width: 10; }
  .artery { fill: none; stroke: #c6cad9; stroke-width: 10; stroke-linejoin: round; }
  .artery.casing { stroke: #a8adc0; stroke-width: 14; }
  .highway { fill: none; stroke: #acb3c8; stroke-width: 13; stroke-linejoin: round; }
  .highway.casing { stroke: #949bb2; stroke-width: 17.5; }

  .label { paint-order: stroke; stroke: #fff; stroke-width: 6; stroke-linejoin: round; stroke-opacity: 0.85; font-weight: 600; fill: #1c1c1e; }
  .bold { font-weight: 650; stroke-width: 8; }
  .metro { font-weight: 700; stroke-width: 9; }
  .town { font-weight: 500; fill: #444; }
  .cape { font-style: italic; fill: #4d5257; stroke-opacity: 0.35; stroke-width: 4; }
  .park { fill: #4c9e3a; }
  .air { fill: #4a7fe0; }
  .bay { font-style: italic; font-weight: 500; fill: #6f9fbd; stroke: none; }
  .line { fill: #4a83b8; stroke: none; }
  .shield { fill: #fff; font-weight: 800; text-anchor: middle; }
  .brand { fill: #3a5c78; font-weight: 600; }
  .legal { fill: #42677f; font-weight: 600; }

  .finder {
    position: absolute;
    left: 42px;
    top: 735px;
    box-sizing: border-box;
    display: flex;
    align-items: center;
    width: 476px;
    height: 55px;
    padding: 0 23px 0 25px;
    border-radius: 14px;
    background: #fff;
  }
  .finder svg { width: 18px; height: 18px; fill: none; stroke: #2b2b2b; stroke-width: 1.6; flex: none; }
  .field {
    box-sizing: border-box;
    flex: 1;
    height: 29px;
    margin-left: 16px;
    padding-left: 9px;
    border: 1px solid #ececec;
    border-bottom-color: #bcbcbc;
    font-size: 18px;
    line-height: 27px;
    color: #b9b9b9;
  }
  .zoom {
    position: absolute;
    left: 590px;
    top: 785px;
    box-sizing: border-box;
    display: flex;
    align-items: center;
    justify-content: space-between;
    width: 66px;
    height: 34px;
    padding: 0 8px;
    border-radius: 11px;
    background: #fff;
  }
  .zoom svg { width: 16px; height: 16px; stroke: #666; stroke-width: 1.7; }
  .compass {
    position: absolute;
    left: 671px;
    top: 751px;
    width: 68px;
    height: 68px;
    border-radius: 50%;
    background: #fff;
  }
  .compass text { font-size: 23px; font-weight: 500; fill: #5c5c5c; text-anchor: middle; }
</style>
